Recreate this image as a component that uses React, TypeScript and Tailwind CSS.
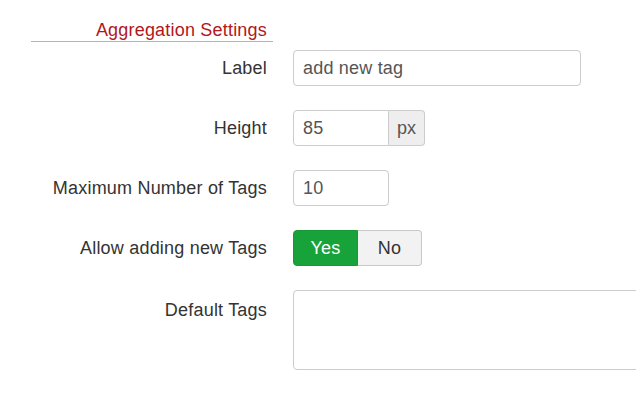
import React from "react";

const font = { fontFamily: '"Liberation Sans", Arial, sans-serif' };

function Row({ label, children }: { label: string; children: React.ReactNode }) {
  return (
    <div className="grid grid-cols-[267px_1fr] gap-x-[26px] items-center h-[36px]">
      <div className="text-right text-[18px] tracking-[0.2px] text-[#333]">{label}</div>
      <div className="flex items-center">{children}</div>
    </div>
  );
}

export default function App() {
  return (
    <div className="w-[636px] h-[394px] bg-white overflow-hidden" style={font}>
      <div className="ml-[31px] w-[242px] pr-[6px] text-right text-[18px] tracking-[0.2px] leading-[20px] text-[#b3161b] pt-[20px] pb-[1px] border-b border-[#f39a9e]">
        Aggregation Settings
      </div>
      <div className="flex flex-col gap-[24px] mt-[8px]">
        <Row label="Label">
          <input
            defaultValue="add new tag"
            className="w-[288px] h-[36px] border border-[#ccc] rounded-[4px] px-[9px] text-[18px] tracking-[0.2px] text-[#555] outline-none"
          />
        </Row>
        <Row label="Height">
          <div className="flex">
            <input
              defaultValue="85"
              className="w-[96px] h-[36px] border border-[#ccc] rounded-l-[4px] px-[9px] text-[18px] tracking-[0.2px] text-[#555] outline-none"
            />
            <span className="w-[36px] h-[36px] flex items-center justify-center bg-[#eee] border border-l-0 border-[#ccc] rounded-r-[4px] text-[18px] text-[#555]">
              px
            </span>
          </div>
        </Row>
        <Row label="Maximum Number of Tags">
          <input
            defaultValue="10"
            className="w-[96px] h-[36px] border border-[#ccc] rounded-[4px] px-[9px] text-[18px] tracking-[0.2px] text-[#555] outline-none"
          />
        </Row>
        <Row label="Allow adding new Tags">
          <div className="flex h-[36px]">
            <button className="w-[65px] h-[36px] bg-[#17a23a] text-white text-[18px] tracking-[0.2px] rounded-l-[4px] border border-[#169a37]">
              Yes
            </button>
            <button className="w-[64px] h-[36px] bg-[#f2f2f2] text-[#333] text-[18px] tracking-[0.2px] rounded-r-[4px] border border-l-0 border-[#c8c8c8]">
              No
            </button>
          </div>
        </Row>
        <div className="grid grid-cols-[267px_1fr] gap-x-[26px]">
          <div className="text-right text-[18px] tracking-[0.2px] text-[#333] pt-[7px]">Default Tags</div>
          <textarea className="w-[360px] h-[80px] border border-[#ccc] rounded-[4px] resize-none outline-none" />
        </div>
      </div>
    </div>
  );
}
